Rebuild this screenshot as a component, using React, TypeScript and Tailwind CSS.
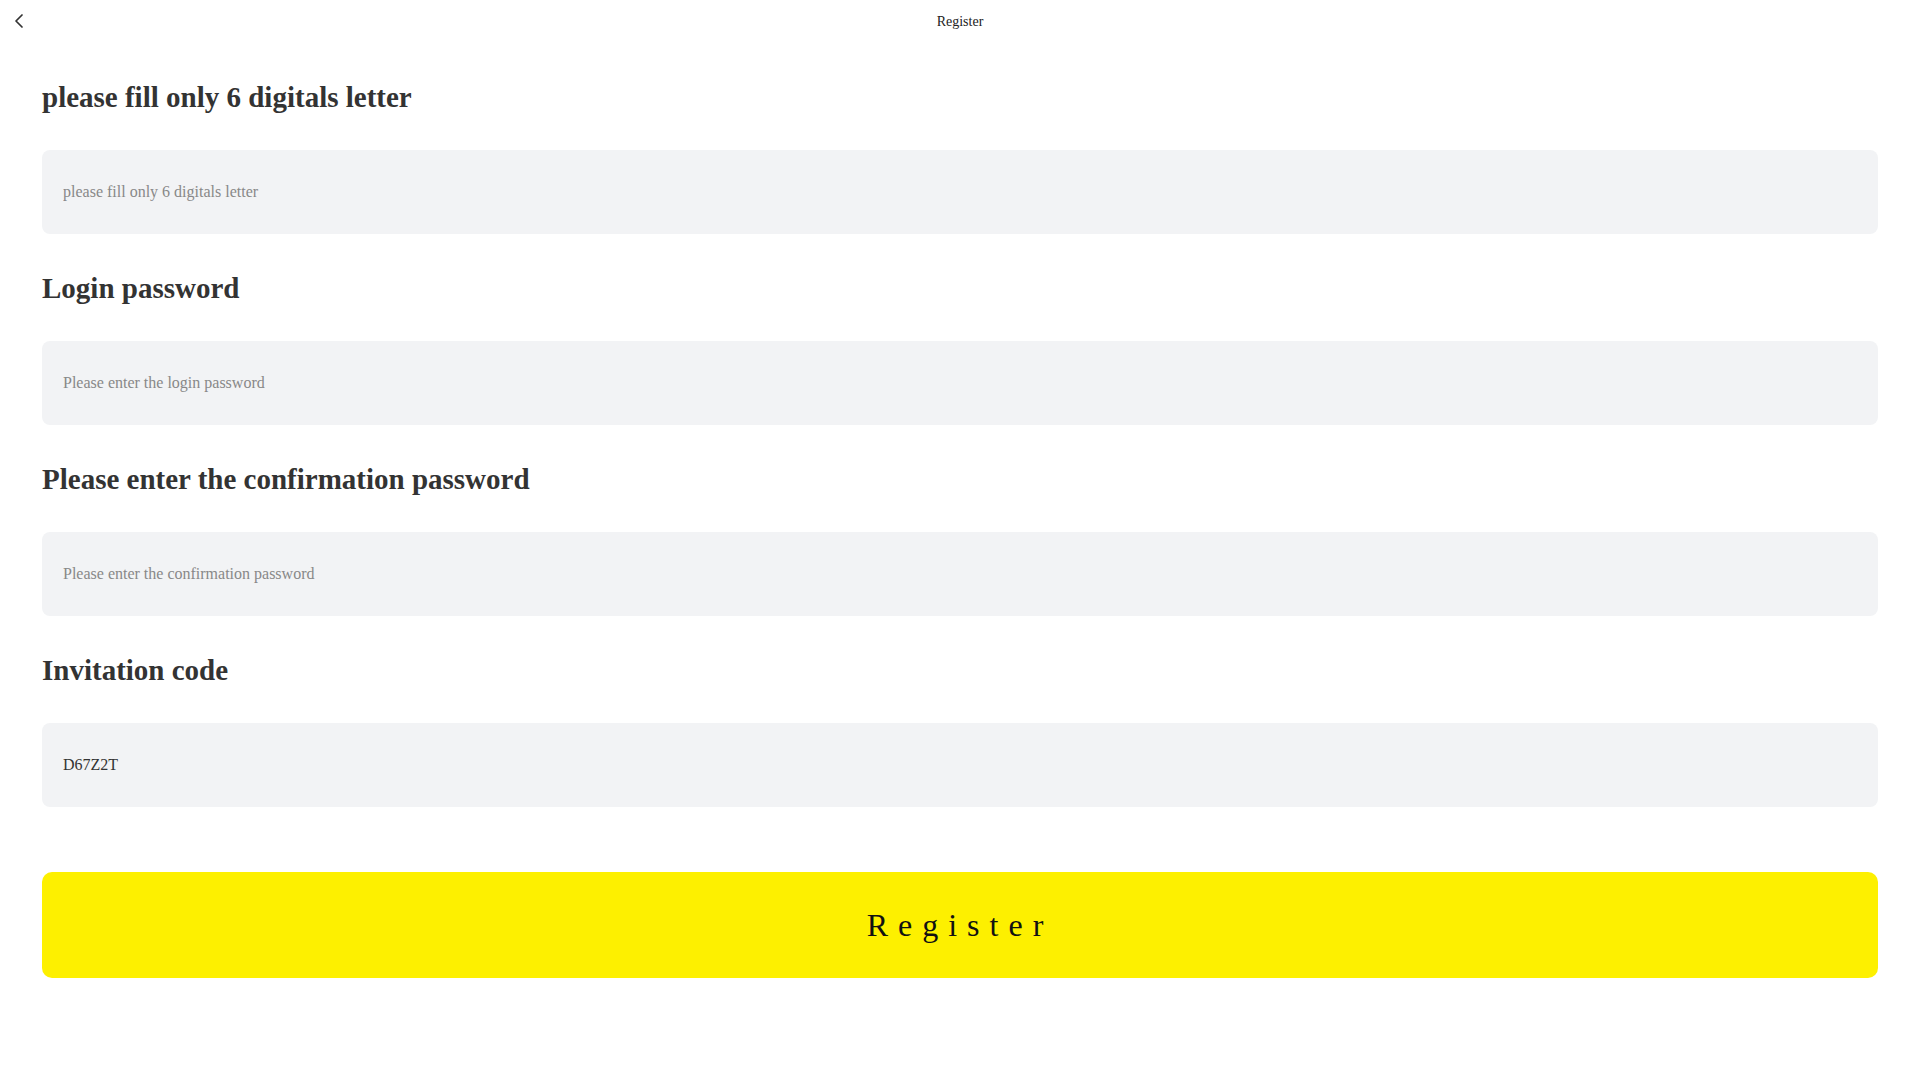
import React from "react"
import { ChevronLeft } from "lucide-react"

interface Field {
    label: string
    placeholder: string
    type: string
    value?: string
}

const FIELDS: Field[] = [
    { label: "please fill only 6 digitals letter", placeholder: "please fill only 6 digitals letter", type: "text" },
    { label: "Login password", placeholder: "Please enter the login password", type: "password" },
    { label: "Please enter the confirmation password", placeholder: "Please enter the confirmation password", type: "password" },
    { label: "Invitation code", placeholder: "Please enter the invitation code", type: "text", value: "D67Z2T" },
]

function FormField({ field }: { field: Field }) {
    return (
        <div className="flex flex-col mb-[38px]">
            <h2 className="text-[29px] leading-[33px] font-bold text-[#333]">{field.label}</h2>
            <input
                type={field.type}
                defaultValue={field.value}
                placeholder={field.placeholder}
                className="mt-[36px] h-[84px] w-full rounded-[8px] bg-[#f2f3f5] px-[21px] text-[16px] text-[#333] placeholder:text-[#888] outline-none font-['Liberation_Serif',serif]"
            />
        </div>
    )
}

export default function App() {
    return (
        <div className="min-h-screen bg-white font-['Liberation_Serif',serif] text-[#333]">
            <header className="grid grid-cols-[1fr_auto_1fr] items-center h-[42px]">
                <button className="flex items-center pl-[7px] text-[#333]">
                    <ChevronLeft size={24} strokeWidth={1.75} />
                </button>
                <span className="text-[14px] text-[#222]">Register</span>
                <span />
            </header>

            <main className="px-[42px] pt-[39px]">
                {FIELDS.map((field, index) => (
                    <FormField key={index} field={field} />
                ))}

                <button className="mt-[27px] w-full h-[106px] rounded-[10px] bg-[#fdf000] text-[32px] tracking-[10px] text-[#111] font-['Liberation_Serif',serif]">
                    Register
                </button>
            </main>
        </div>
    )
}
